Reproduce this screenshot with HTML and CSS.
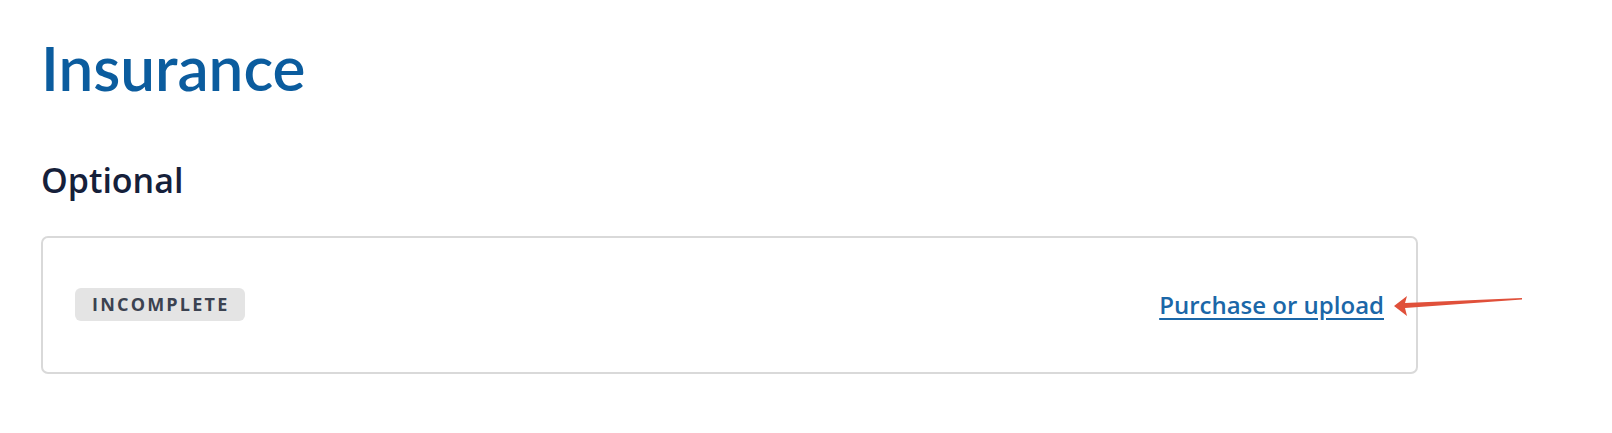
FILE: index.html
```html
<!DOCTYPE html>
<html>
<head>
    <meta charset="UTF-8">
    <meta name="viewport" content="width=device-width, initial-scale=1.0">
    <title>Insurance</title>
    <link rel="stylesheet" href="styles.css">
</head>
<body>
    <div class="page">
        <h1>Insurance</h1>
        <h2>Optional</h2>
        <div class="card">
            <span class="badge">INCOMPLETE</span>
            <div class="action">
                <a href="#" class="link">Purchase or upload</a>
                <svg class="arrow" width="140" height="24" viewBox="0 0 140 24">
                    <polygon points="0,13 13,3 11,10 128,5 128,6.5 11,15 13,23" fill="#e0503a"/>
                </svg>
            </div>
        </div>
    </div>
</body>
</html>
```

FILE: styles.css
```css
body {
    margin: 0;
    padding: 0;
    background-color: #fff;
    font-family: Lato, "Open Sans", sans-serif;
}

.page {
    max-width: 1377px;
    padding: 30px 0 0 41px;
}

h1 {
    margin: 0;
    font-size: 62px;
    line-height: 1.2;
    font-weight: 600;
    color: #0b5c9e;
}

h2 {
    margin: 55px 0 0 0;
    font-family: "Open Sans", sans-serif;
    font-size: 34px;
    line-height: 1.25;
    font-weight: 600;
    color: #15203a;
}

.card {
    margin-top: 34px;
    height: 134px;
    padding: 0 32px;
    border: 2px solid #d9d9d9;
    border-radius: 7px;
    display: flex;
    justify-content: space-between;
    align-items: center;
}

.badge {
    display: inline-block;
    padding: 0 16px 0 17px;
    height: 33px;
    line-height: 33px;
    background-color: #e4e4e4;
    border-radius: 6px;
    font-family: "Open Sans", sans-serif;
    font-size: 18px;
    font-weight: 700;
    letter-spacing: 2.2px;
    color: #3b4250;
}

.action {
    position: relative;
}

.link {
    font-family: "Open Sans", sans-serif;
    font-size: 24px;
    font-weight: 600;
    color: #1b67a8;
    text-decoration: underline;
    text-underline-offset: 4px;
}

.arrow {
    position: absolute;
    left: calc(100% + 10px);
    top: 5px;
}
```
